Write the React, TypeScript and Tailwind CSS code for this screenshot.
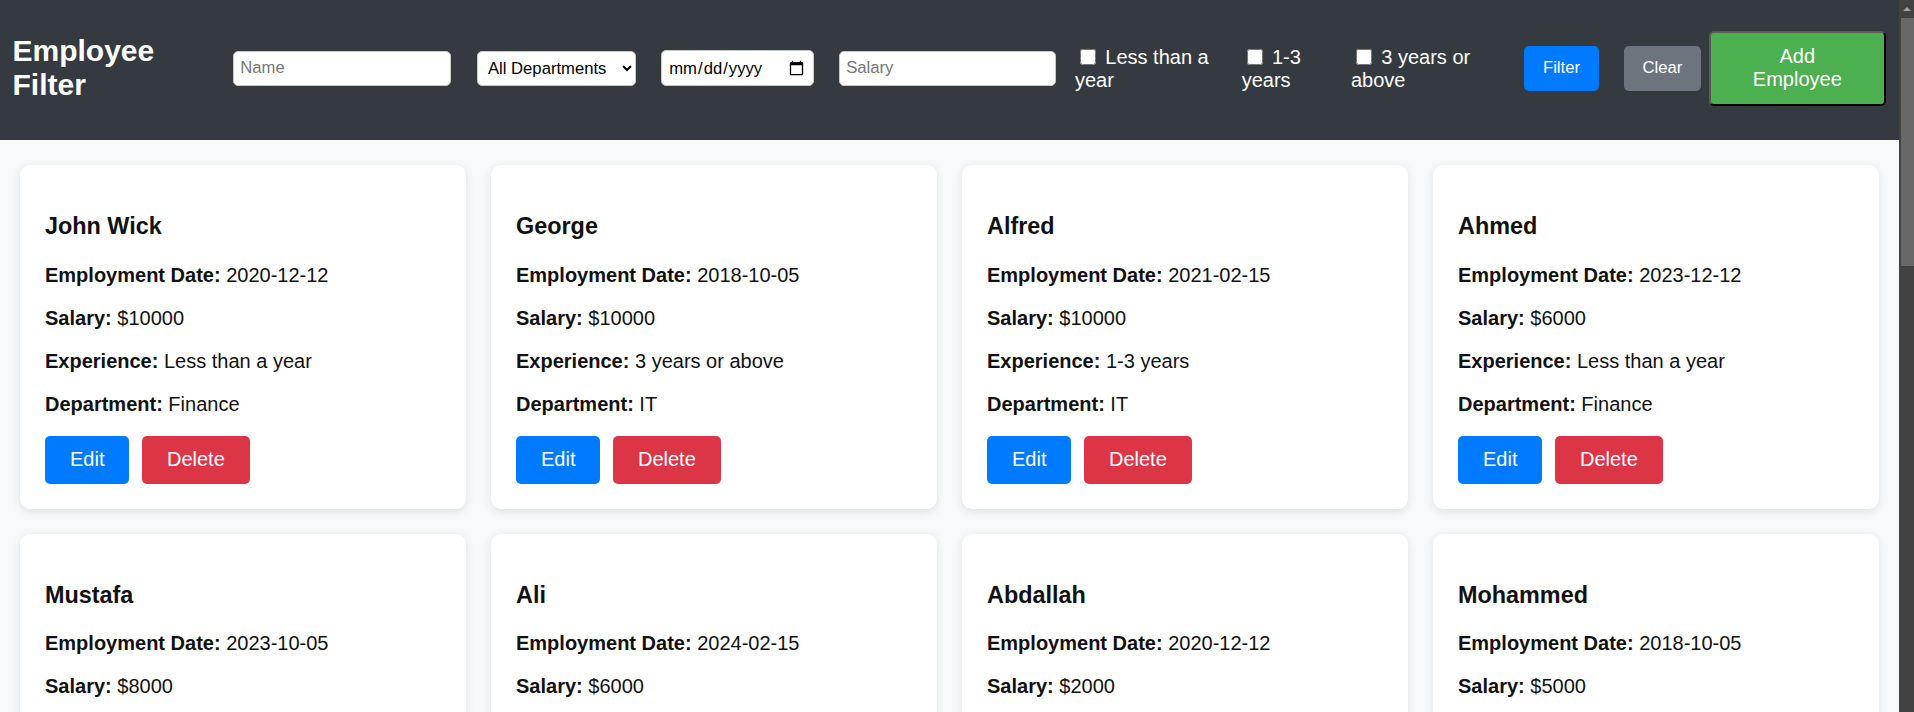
import { useState } from 'react'

type Employee = {
  id: number
  name: string
  employmentDate: string
  salary: number
  experience: string
  department: string
}

const employees: Employee[] = [
  { id: 1, name: 'John Wick', employmentDate: '2020-12-12', salary: 10000, experience: 'Less than a year', department: 'Finance' },
  { id: 2, name: 'George', employmentDate: '2018-10-05', salary: 10000, experience: '3 years or above', department: 'IT' },
  { id: 3, name: 'Alfred', employmentDate: '2021-02-15', salary: 10000, experience: '1-3 years', department: 'IT' },
  { id: 4, name: 'Ahmed', employmentDate: '2023-12-12', salary: 6000, experience: 'Less than a year', department: 'Finance' },
  { id: 5, name: 'Mustafa', employmentDate: '2023-10-05', salary: 8000, experience: 'Less than a year', department: 'HR' },
  { id: 6, name: 'Ali', employmentDate: '2024-02-15', salary: 6000, experience: 'Less than a year', department: 'IT' },
  { id: 7, name: 'Abdallah', employmentDate: '2020-12-12', salary: 2000, experience: '3 years or above', department: 'Finance' },
  { id: 8, name: 'Mohammed', employmentDate: '2018-10-05', salary: 5000, experience: '3 years or above', department: 'HR' },
]

const experienceOptions = [
  { label: 'Less than a year', width: 'w-[141.7px]', margin: 'mr-[25px]' },
  { label: '1-3 years', width: 'w-[84.3px]', margin: 'mr-[25px]' },
  { label: '3 years or above', width: 'w-[148px]', margin: 'mr-[25px]' },
]

function EmployeeCard({ employee }: { employee: Employee }) {
  return (
    <div className="bg-white rounded-[10px] p-[25px] shadow-[0_2.5px_10px_rgba(0,0,0,0.1)] text-[#111] text-[20px] leading-[23px]">
      <h3 className="text-[23.4px] leading-[26.9px] font-bold my-[23.4px]">{employee.name}</h3>
      <p className="my-[20px]">
        <strong>Employment Date:</strong> {employee.employmentDate}
      </p>
      <p className="my-[20px]">
        <strong>Salary:</strong> ${employee.salary}
      </p>
      <p className="my-[20px]">
        <strong>Experience:</strong> {employee.experience}
      </p>
      <p className="my-[20px]">
        <strong>Department:</strong> {employee.department}
      </p>
      <div className="flex gap-[12.5px]">
        <button className="bg-[#007bff] text-white rounded-[5px] px-[25px] py-[12.5px] text-[20px] leading-[23px]">
          Edit
        </button>
        <button className="bg-[#dc3545] text-white rounded-[5px] px-[25px] py-[12.5px] text-[20px] leading-[23px]">
          Delete
        </button>
      </div>
    </div>
  )
}

export default function App() {
  const [name, setName] = useState('')
  const [department, setDepartment] = useState('')
  const [date, setDate] = useState('')
  const [salary, setSalary] = useState('')
  const [experience, setExperience] = useState<string[]>([])

  const toggleExperience = (label: string) => {
    setExperience(experience.includes(label) ? experience.filter((e) => e !== label) : [...experience, label])
  }

  const inputClass =
    'bg-white text-black border-[1.25px] border-solid border-[#c8c8c8] rounded-[5px] px-[6.25px] text-[16.67px] placeholder:text-[#757575]'

  return (
    <div className="flex h-[712px] overflow-hidden font-['Liberation_Sans',Arial,sans-serif]">
      <div className="flex-1 min-w-0 bg-[#f8f9fa]">
        {/* header / filter bar */}
        <div className="flex items-center h-[140px] pb-[3.4px] px-[12.5px] bg-[#343a40] text-white">
          <h2 className="w-[150px] mr-[70.5px] text-[30px] leading-[34.5px] font-bold shrink-0">Employee Filter</h2>
          <input
            type="text"
            placeholder="Name"
            value={name}
            onChange={(e) => setName(e.target.value)}
            className={`${inputClass} w-[218px] h-[34.7px] mr-[25.7px] shrink-0`}
          />
          <select
            value={department}
            onChange={(e) => setDepartment(e.target.value)}
            className={`${inputClass} w-[159px] h-[35px] mr-[25.3px] shrink-0`}
          >
            <option value="">All Departments</option>
            <option value="IT">IT</option>
            <option value="Finance">Finance</option>
            <option value="HR">HR</option>
          </select>
          <input
            type="date"
            value={date}
            onChange={(e) => setDate(e.target.value)}
            className={`${inputClass} w-[153px] h-[35.7px] mr-[25px] shrink-0`}
          />
          <input
            type="text"
            placeholder="Salary"
            value={salary}
            onChange={(e) => setSalary(e.target.value)}
            className={`${inputClass} w-[217px] h-[34.7px] mr-[19px] shrink-0`}
          />
          {experienceOptions.map((opt) => (
            <label key={opt.label} className={`${opt.width} ${opt.margin} shrink-0 text-[20px] leading-[23px]`}>
              <input
                type="checkbox"
                checked={experience.includes(opt.label)}
                onChange={() => toggleExperience(opt.label)}
                className="w-[16px] h-[16px] ml-[5px] mr-[3.75px] my-[3.75px] align-[-1px]"
              />{' '}
              {opt.label}
            </label>
          ))}
          <button className="w-[75px] shrink-0 mr-[25px] bg-[#007bff] text-white rounded-[5px] py-[12.5px] text-[16.67px] leading-[19.7px]">
            Filter
          </button>
          <button className="w-[76.7px] shrink-0 mr-[8px] bg-[#6c757d] text-white rounded-[5px] py-[12.5px] text-[16.67px] leading-[19.7px]">
            Clear
          </button>
          <button className="w-[177.3px] shrink-0 bg-[#4caf50] text-white rounded-[5px] px-[25px] py-[12.5px] text-[20px] leading-[23px] border-2 border-solid border-t-[#5a5a5a] border-l-[#5a5a5a] border-b-black border-r-black">
            Add Employee
          </button>
        </div>

        {/* employee cards */}
        <div className="grid grid-cols-4 gap-[25px] pt-[25px] px-[20px]">
          {employees.map((emp) => (
            <EmployeeCard key={emp.id} employee={emp} />
          ))}
        </div>
      </div>

      {/* scrollbar */}
      <div className="w-[15px] shrink-0 bg-[#424242] flex flex-col">
        <div className="h-[18px] flex items-center justify-center">
          <div className="w-0 h-0 border-l-[4px] border-r-[4px] border-b-[4px] border-solid border-l-transparent border-r-transparent border-b-[#a3a3a3]" />
        </div>
        <div className="h-[248px] ml-[2px] bg-[#686868]" />
      </div>
    </div>
  )
}
